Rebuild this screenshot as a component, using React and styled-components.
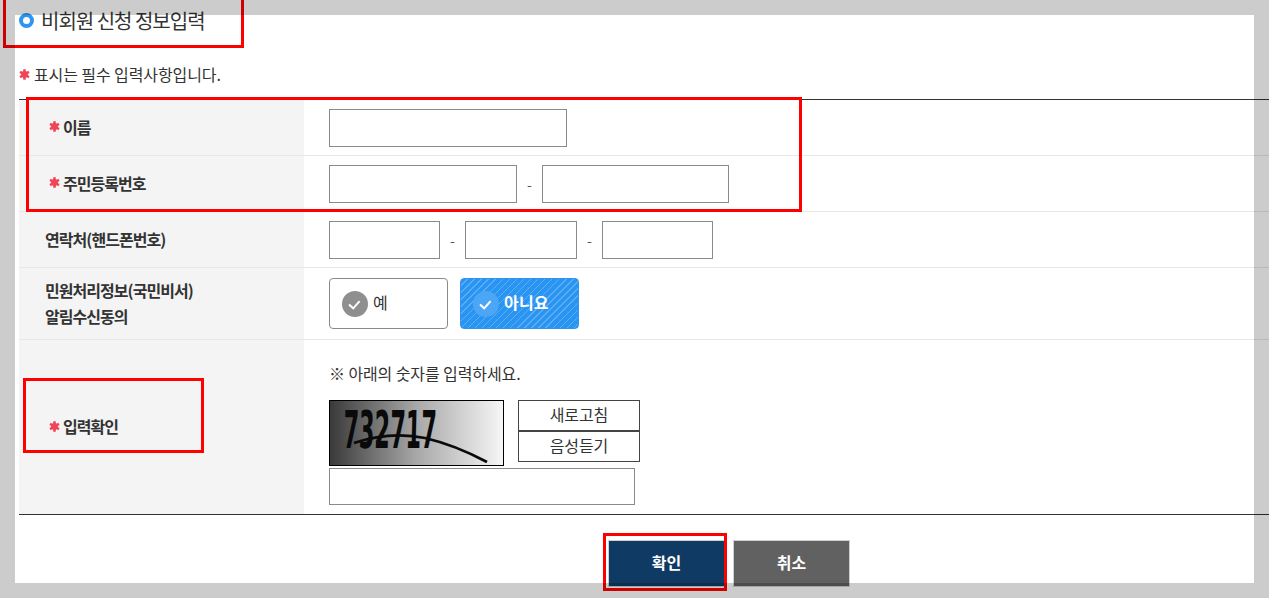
import React from 'react';
import styled, { createGlobalStyle } from 'styled-components';

const GlobalStyle = createGlobalStyle`
  html, body {
    margin: 0;
    padding: 0;
    background: #fff;
    overflow: hidden;
  }
  body {
    font-family: "Noto Sans CJK KR", "Noto Sans", sans-serif;
    color: #333;
  }
`;

const Page = styled.div`
  position: relative;
  width: 1269px;
  height: 598px;
  padding: 15px 15px 15px 19px;
  box-sizing: border-box;
  overflow: hidden;
  background: #fff;
`;

/* dimmed frame that sits over everything, markers included */
const Frame = styled.div`
  position: absolute;
  inset: 0;
  box-sizing: border-box;
  border: 15px solid rgba(0, 0, 0, 0.2);
  pointer-events: none;
`;

const Heading = styled.h2`
  display: flex;
  align-items: center;
  gap: 7px;
  height: 30px;
  margin: -10px 0 0;
  font-size: 20px;
  font-weight: 400;
  letter-spacing: -1px;
  color: #333;
`;

const HeadingDot = styled.span`
  width: 7px;
  height: 7px;
  border: 4px solid #2e96f0;
  border-radius: 50%;
  background: #fff;
`;

const Notice = styled.p`
  display: flex;
  align-items: center;
  gap: 4px;
  height: 22px;
  margin: 28px 0 14px 0;
  font-size: 16px;
  letter-spacing: -0.1px;
  color: #333;
`;

const Star = styled.svg`
  width: 11px;
  height: 11px;
  flex: none;
  color: #ef4558;
`;

const Table = styled.section`
  width: 1250px;
  border-top: 1px solid #333;
  border-bottom: 1px solid #333;
`;

const Row = styled.div`
  display: flex;
  box-sizing: border-box;
  height: ${p => p.$height}px;
  border-bottom: ${p => (p.$last ? 'none' : '1px solid #e8e8e8')};
`;

const Label = styled.div`
  display: flex;
  align-items: center;
  gap: 3px;
  width: 285px;
  flex: none;
  box-sizing: border-box;
  padding: 0 0 2px ${p => (p.$plain ? '26px' : '30px')};
  background: #f4f4f4;
  font-size: 16px;
  font-weight: 700;
  letter-spacing: -0.95px;
  line-height: 26px;
  color: #333;
`;

const Value = styled.div`
  display: flex;
  align-items: center;
  padding-left: 25px;
`;

const Input = styled.input`
  display: block;
  width: ${p => p.$width}px;
  height: ${p => p.$height || 38}px;
  box-sizing: border-box;
  border: 1px solid #8a8a8a;
  background: #fff;
  padding: 0;
  margin: 0;
`;

const Dash = styled.span`
  width: ${p => p.$width}px;
  text-align: center;
  font-size: 14px;
  color: #555;
`;

const ChoiceGroup = styled.div`
  display: flex;
  gap: 12px;
`;

const Choice = styled.button`
  display: flex;
  align-items: center;
  gap: 5px;
  width: ${p => p.$width}px;
  height: 51px;
  box-sizing: border-box;
  padding: 0 0 3px 12px;
  border: 1px solid ${p => (p.$active ? '#2e96f0' : '#8a8a8a')};
  border-radius: 4px;
  font-family: inherit;
  font-size: 16px;
  font-weight: ${p => (p.$active ? 700 : 400)};
  letter-spacing: 0.2px;
  color: ${p => (p.$active ? '#fff' : '#333')};
  background: ${p =>
    p.$active
      ? 'repeating-linear-gradient(135deg, #2a94f2 0 4px, #5badf6 4px 5px)'
      : '#fff'};
`;

const CheckIcon = styled.svg`
  width: 26px;
  height: 26px;
  flex: none;
  margin-top: 4px;
`;

const CaptchaCell = styled.div`
  display: flex;
  flex-direction: column;
  padding: 20px 0 0 25px;
`;

const Hint = styled.p`
  height: 26px;
  margin: 0 0 14px;
  font-size: 16px;
  line-height: 26px;
  letter-spacing: -0.1px;
  color: #333;
`;

const CaptchaRow = styled.div`
  display: flex;
  gap: 14px;
  margin-bottom: 2px;
`;

const CaptchaImage = styled.svg`
  display: block;
  width: 175px;
  height: 66px;
  box-sizing: border-box;
  border: 1px solid #000;
`;

const CaptchaButtons = styled.div`
  display: flex;
  flex-direction: column;
`;

const CaptchaButton = styled.button`
  width: 122px;
  height: 31px;
  box-sizing: border-box;
  padding: 0 0 3px;
  border: 1px solid #444;
  background: #fff;
  font-family: inherit;
  font-size: 16px;
  line-height: 24px;
  letter-spacing: -0.1px;
  color: #333;
`;

const Actions = styled.div`
  display: flex;
  gap: 8px;
  margin: 25px 0 0;
  padding-left: 589px;
`;

const ActionButton = styled.button`
  width: 117px;
  height: 47px;
  box-sizing: border-box;
  padding: 0 0 3px;
  border: 1px solid #d0d0d0;
  background: ${p => p.$bg};
  font-family: inherit;
  font-size: 16px;
  font-weight: 700;
  color: #fff;
`;

const Marker = styled.div`
  position: absolute;
  box-sizing: border-box;
  border: 3px solid #ff0000;
  left: ${p => p.$x}px;
  top: ${p => p.$y}px;
  width: ${p => p.$w}px;
  height: ${p => p.$h}px;
  pointer-events: none;
`;

const StarMark = () => (
  <Star viewBox="0 0 12 12" aria-hidden="true">
    <path
      d="M6 6V.4M6 6l4.9-2.8M6 6l4.9 2.8M6 6v5.6M6 6L1.1 8.8M6 6L1.1 3.2"
      stroke="currentColor"
      strokeWidth="2.8"
      fill="none"
    />
    <circle cx="6" cy="6" r="3.7" fill="currentColor" />
  </Star>
);

const Check = ({ circle, tick }) => (
  <CheckIcon viewBox="0 0 26 26" aria-hidden="true">
    <circle cx="13" cy="13" r="13" fill={circle} />
    <path d="M7 13.5l4.2 3.8 6.4-7.2" stroke={tick} strokeWidth="2" fill="none" />
  </CheckIcon>
);

const Captcha = () => (
  <CaptchaImage viewBox="0 0 173 64" aria-label="732717">
    <defs>
      <linearGradient id="captchaFade" x1="0" x2="1" y1="0" y2="0">
        <stop offset="0" stopColor="#3a3a3a" />
        <stop offset="0.5" stopColor="#a8a8a8" />
        <stop offset="1" stopColor="#f6f6f6" />
      </linearGradient>
    </defs>
    <rect width="173" height="64" fill="url(#captchaFade)" />
    <text
      transform="translate(13 47) scale(0.43 1) skewX(-3)"
      fontFamily="'DejaVu Sans', sans-serif"
      fontWeight="700"
      fontSize="52"
      fill="#0a0a0a"
    >
      732717
    </text>
    <path d="M24 42Q60 30 95 37Q125 44 157 61" stroke="#0a0a0a" strokeWidth="2.8" fill="none" />
  </CaptchaImage>
);

export default function App() {
  return (
    <>
      <GlobalStyle />
      <Page>
        <Heading>
          <HeadingDot />
          비회원 신청 정보입력
        </Heading>
        <Notice>
          <StarMark />
          표시는 필수 입력사항입니다.
        </Notice>
        <Table>
          <Row $height={56}>
            <Label>
              <StarMark />
              이름
            </Label>
            <Value>
              <Input $width={238} />
            </Value>
          </Row>
          <Row $height={56}>
            <Label>
              <StarMark />
              주민등록번호
            </Label>
            <Value>
              <Input $width={188} />
              <Dash $width={25}>-</Dash>
              <Input $width={187} />
            </Value>
          </Row>
          <Row $height={56}>
            <Label $plain>연락처(핸드폰번호)</Label>
            <Value>
              <Input $width={111} />
              <Dash $width={25}>-</Dash>
              <Input $width={112} />
              <Dash $width={25}>-</Dash>
              <Input $width={111} />
            </Value>
          </Row>
          <Row $height={72}>
            <Label $plain>
              <div>
                민원처리정보(국민비서)
                <br />
                알림수신동의
              </div>
            </Label>
            <Value>
              <ChoiceGroup>
                <Choice $width={119}>
                  <Check circle="#8f8f8f" tick="#fff" />예
                </Choice>
                <Choice $width={119} $active>
                  <Check circle="#4ba6f5" tick="#fff" />아니요
                </Choice>
              </ChoiceGroup>
            </Value>
          </Row>
          <Row $height={174} $last>
            <Label>
              <StarMark />
              입력확인
            </Label>
            <CaptchaCell>
              <Hint>※ 아래의 숫자를 입력하세요.</Hint>
              <CaptchaRow>
                <Captcha />
                <CaptchaButtons>
                  <CaptchaButton>새로고침</CaptchaButton>
                  <CaptchaButton>음성듣기</CaptchaButton>
                </CaptchaButtons>
              </CaptchaRow>
              <Input $width={306} $height={37} />
            </CaptchaCell>
          </Row>
        </Table>
        <Actions>
          <ActionButton $bg="#0e3a63">확인</ActionButton>
          <ActionButton $bg="#616161">취소</ActionButton>
        </Actions>
        <Marker $x={3} $y={-3} $w={241} $h={51} />
        <Marker $x={26} $y={97} $w={776} $h={115} />
        <Marker $x={23} $y={378} $w={181} $h={75} />
        <Marker $x={603} $y={533} $w={124} $h={58} />
        <Frame />
      </Page>
    </>
  );
}
